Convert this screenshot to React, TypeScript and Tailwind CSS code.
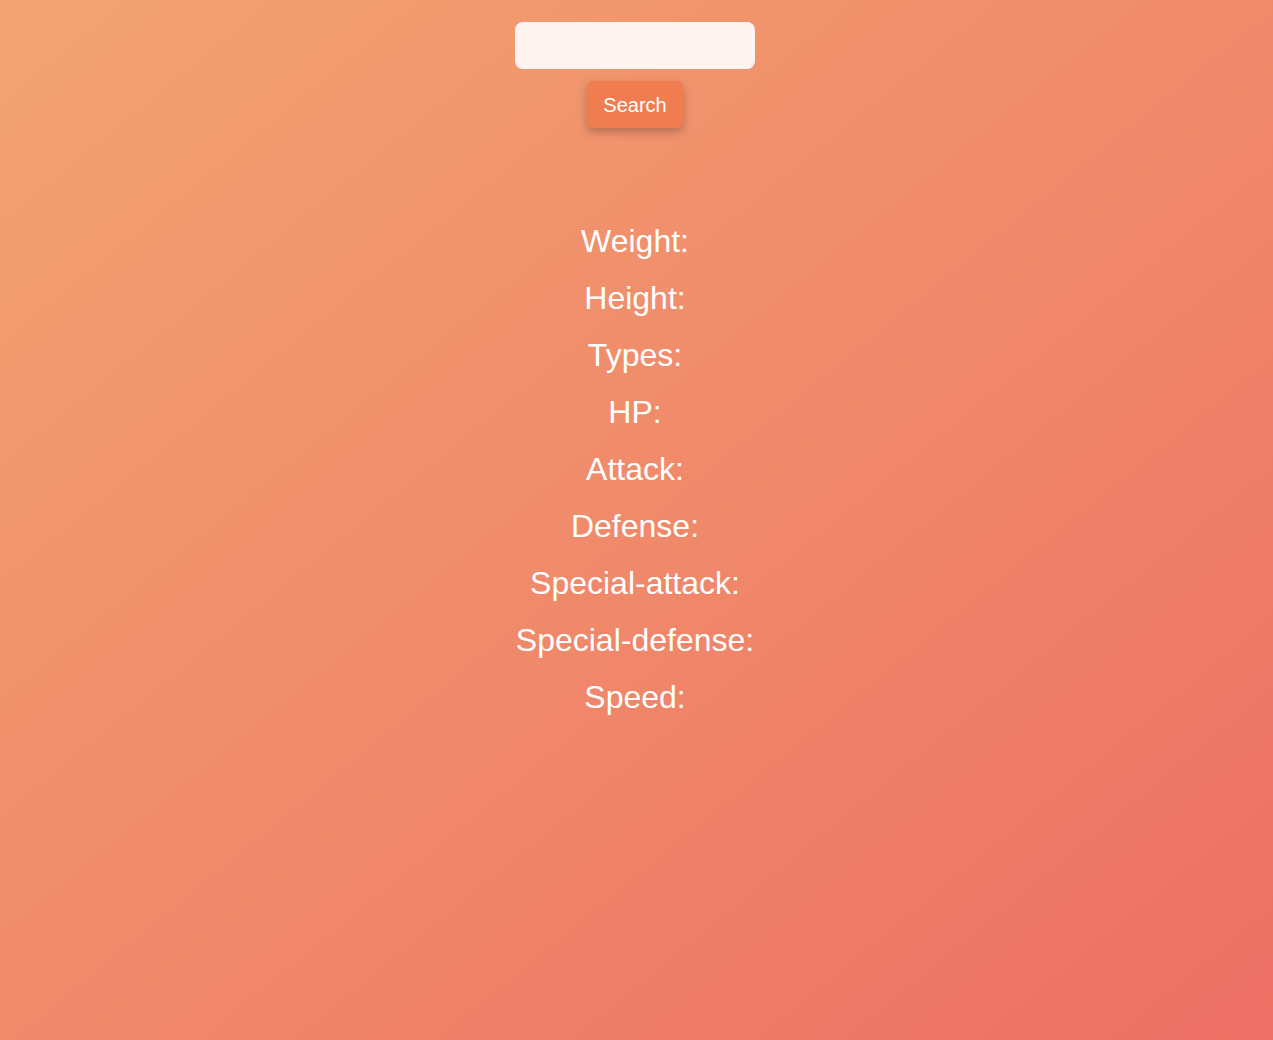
const STATS = [
  "Weight:",
  "Height:",
  "Types:",
  "HP:",
  "Attack:",
  "Defense:",
  "Special-attack:",
  "Special-defense:",
  "Speed:",
];

export default function App() {
  return (
    <div className="min-h-screen bg-gradient-to-br from-[#f2a370] to-[#ed6f65] font-['Liberation_Sans',Arial,sans-serif] text-white">
      <div className="flex flex-col items-center pt-[22px] pr-[3px]">
        <input
          type="text"
          className="w-[240px] h-[47px] rounded-lg bg-[#fdf4f1] px-3 text-gray-800 outline-none"
        />
        <button className="mt-3 h-[47px] px-4 rounded-md bg-[#ef7d4f] text-[20px] text-white shadow-[0_4px_10px_rgba(0,0,0,0.25)]">
          Search
        </button>
        <div className="mt-[85px] flex flex-col items-center">
          {STATS.map((s) => (
            <p key={s} className="text-[32px] leading-[57px]">
              {s}
            </p>
          ))}
        </div>
      </div>
    </div>
  );
}
